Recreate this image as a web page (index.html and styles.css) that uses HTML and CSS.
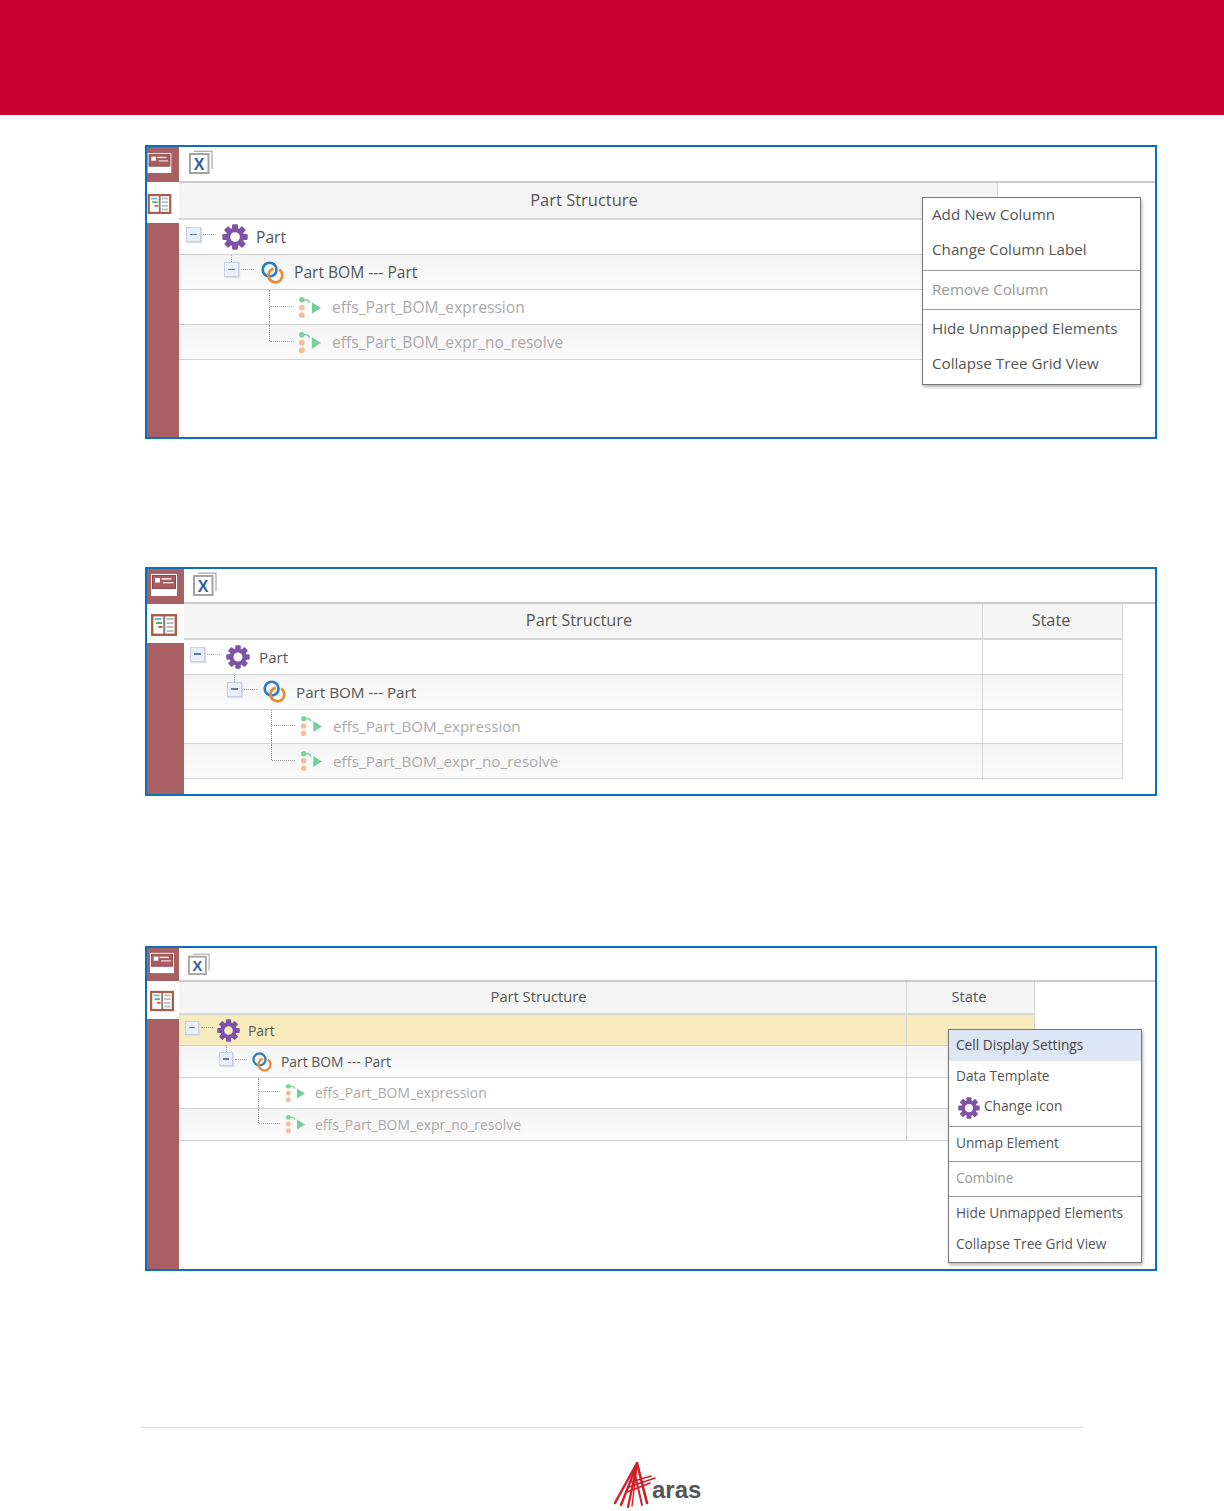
FILE: index.html
```html
<!DOCTYPE html>
<html lang="en">
<head>
<meta charset="utf-8">
<title>Part Structure</title>
<link rel="stylesheet" href="styles.css">
</head>
<body>
<svg class="defs" width="0" height="0" aria-hidden="true">
  <symbol id="gear" viewBox="0 0 24 24">
    <g fill="#7d52a8">
      <rect x="9.3" y="0.3" width="5.4" height="6" rx="1"/>
      <rect x="9.3" y="0.3" width="5.4" height="6" rx="1" transform="rotate(45 12 12)"/>
      <rect x="9.3" y="0.3" width="5.4" height="6" rx="1" transform="rotate(90 12 12)"/>
      <rect x="9.3" y="0.3" width="5.4" height="6" rx="1" transform="rotate(135 12 12)"/>
      <rect x="9.3" y="0.3" width="5.4" height="6" rx="1" transform="rotate(180 12 12)"/>
      <rect x="9.3" y="0.3" width="5.4" height="6" rx="1" transform="rotate(225 12 12)"/>
      <rect x="9.3" y="0.3" width="5.4" height="6" rx="1" transform="rotate(270 12 12)"/>
      <rect x="9.3" y="0.3" width="5.4" height="6" rx="1" transform="rotate(315 12 12)"/>
    </g>
    <circle cx="12" cy="12" r="6.5" fill="none" stroke="#7d52a8" stroke-width="4"/>
  </symbol>
  <symbol id="rings" viewBox="0 0 24 24">
    <circle cx="9" cy="9" r="7.2" fill="none" stroke="#2f7fc4" stroke-width="2.8"/>
    <path d="M19 9A7.2 7.2 0 1 1 13 8.08" fill="none" stroke="#e98a35" stroke-width="2.8"/>
  </symbol>
  <symbol id="effect" viewBox="0 0 24 24">
    <circle cx="4" cy="4" r="2.9" fill="#7fd0a0"/>
    <path d="M4 4H8Q11 4 12 7" fill="none" stroke="#7fd0a0" stroke-width="1.6"/>
    <circle cx="4" cy="12" r="3" fill="#f2bf9a"/>
    <circle cx="4" cy="20" r="3" fill="#f2bf9a"/>
    <path d="M14.5 6.5L24 12.5L14.5 18.5Z" fill="#74cf9b"/>
  </symbol>
  <symbol id="card" viewBox="0 0 26 22">
    <rect width="26" height="22" fill="#fff"/>
    <rect x="1.5" y="1.5" width="23" height="13" fill="#a85c5f" stroke="#93484c"/>
    <rect x="4" y="4" width="5" height="4.5" fill="#fff"/>
    <rect x="10.5" y="4.2" width="10" height="1.4" fill="#fff"/>
    <rect x="12" y="8" width="10.5" height="1.4" fill="#eedcdc"/>
  </symbol>
  <symbol id="tree" viewBox="0 0 26 22">
    <rect x="1.2" y="1.2" width="23.6" height="19.6" fill="#fff" stroke="#ad5c47" stroke-width="2.4"/>
    <rect x="3.5" y="4" width="7" height="2" fill="#7ab7e0"/>
    <rect x="5" y="8" width="6" height="2" fill="#55b36a"/>
    <rect x="7.5" y="12" width="4" height="2" fill="#d9583d"/>
    <rect x="12.2" y="2" width="2" height="18" fill="#7d7d7d"/>
    <g fill="#bdbdbd">
      <rect x="15.5" y="4" width="7" height="2"/>
      <rect x="15.5" y="8" width="7" height="2"/>
      <rect x="15.5" y="12" width="7" height="2"/>
      <rect x="15.5" y="16" width="7" height="2"/>
    </g>
  </symbol>
</svg>

<header class="banner"></header>

<main class="doc">
  <section class="panel panel-a">
    <div class="rail">
      <div class="rail-top"><svg class="rail-icon"><use href="#card"/></svg></div>
      <div class="rail-tab"><svg class="rail-icon"><use href="#tree"/></svg></div>
    </div>
    <div class="content">
      <div class="toolbar">
        <svg class="excel" viewBox="0 0 24 24"><path class="excel-back" d="M5 1.2H23V19"/><rect class="excel-front" x="1" y="4" width="18.5" height="19"/><text class="excel-x" x="10.2" y="19.5" text-anchor="middle">X</text></svg>
      </div>
      <div class="grid">
        <div class="row head"><div class="cell c1">Part Structure</div></div>
        <div class="row"><div class="cell c1"><div class="node lvl0"><span class="exp"></span><span class="dots"></span><svg class="icon"><use href="#gear"/></svg><span class="label">Part</span></div></div></div>
        <div class="row alt"><div class="cell c1"><div class="node lvl1"><span class="exp"></span><span class="dots"></span><svg class="icon"><use href="#rings"/></svg><span class="label">Part BOM --- Part</span></div></div></div>
        <div class="row"><div class="cell c1"><div class="node lvl2 tee"><span class="dots"></span><svg class="icon"><use href="#effect"/></svg><span class="label dim">effs_Part_BOM_expression</span></div></div></div>
        <div class="row alt"><div class="cell c1"><div class="node lvl2 ell"><span class="dots"></span><svg class="icon"><use href="#effect"/></svg><span class="label dim">effs_Part_BOM_expr_no_resolve</span></div></div></div>
      </div>
    </div>
    <div class="menu">
      <div class="group"><div class="item">Add New Column</div><div class="item">Change Column Label</div></div>
      <div class="group"><div class="item off">Remove Column</div></div>
      <div class="group"><div class="item">Hide Unmapped Elements</div><div class="item">Collapse Tree Grid View</div></div>
    </div>
  </section>

  <section class="panel panel-b">
    <div class="rail">
      <div class="rail-top"><svg class="rail-icon"><use href="#card"/></svg></div>
      <div class="rail-tab"><svg class="rail-icon"><use href="#tree"/></svg></div>
    </div>
    <div class="content">
      <div class="toolbar">
        <svg class="excel" viewBox="0 0 24 24"><path class="excel-back" d="M5 1.2H23V19"/><rect class="excel-front" x="1" y="4" width="18.5" height="19"/><text class="excel-x" x="10.2" y="19.5" text-anchor="middle">X</text></svg>
      </div>
      <div class="grid">
        <div class="row head"><div class="cell c1">Part Structure</div><div class="cell c2">State</div></div>
        <div class="row"><div class="cell c1"><div class="node lvl0"><span class="exp"></span><span class="dots"></span><svg class="icon"><use href="#gear"/></svg><span class="label">Part</span></div></div><div class="cell c2"></div></div>
        <div class="row alt"><div class="cell c1"><div class="node lvl1"><span class="exp"></span><span class="dots"></span><svg class="icon"><use href="#rings"/></svg><span class="label">Part BOM --- Part</span></div></div><div class="cell c2"></div></div>
        <div class="row"><div class="cell c1"><div class="node lvl2 tee"><span class="dots"></span><svg class="icon"><use href="#effect"/></svg><span class="label dim">effs_Part_BOM_expression</span></div></div><div class="cell c2"></div></div>
        <div class="row alt"><div class="cell c1"><div class="node lvl2 ell"><span class="dots"></span><svg class="icon"><use href="#effect"/></svg><span class="label dim">effs_Part_BOM_expr_no_resolve</span></div></div><div class="cell c2"></div></div>
      </div>
    </div>
  </section>

  <section class="panel panel-c">
    <div class="rail">
      <div class="rail-top"><svg class="rail-icon"><use href="#card"/></svg></div>
      <div class="rail-tab"><svg class="rail-icon"><use href="#tree"/></svg></div>
    </div>
    <div class="content">
      <div class="toolbar">
        <svg class="excel" viewBox="0 0 24 24"><path class="excel-back" d="M5 1.2H23V19"/><rect class="excel-front" x="1" y="4" width="18.5" height="19"/><text class="excel-x" x="10.2" y="19.5" text-anchor="middle">X</text></svg>
      </div>
      <div class="grid">
        <div class="row head"><div class="cell c1">Part Structure</div><div class="cell c2">State</div></div>
        <div class="row selected"><div class="cell c1"><div class="node lvl0"><span class="exp"></span><span class="dots"></span><svg class="icon"><use href="#gear"/></svg><span class="label">Part</span></div></div><div class="cell c2"></div></div>
        <div class="row alt"><div class="cell c1"><div class="node lvl1"><span class="exp"></span><span class="dots"></span><svg class="icon"><use href="#rings"/></svg><span class="label">Part BOM --- Part</span></div></div><div class="cell c2"></div></div>
        <div class="row"><div class="cell c1"><div class="node lvl2 tee"><span class="dots"></span><svg class="icon"><use href="#effect"/></svg><span class="label dim">effs_Part_BOM_expression</span></div></div><div class="cell c2"></div></div>
        <div class="row alt"><div class="cell c1"><div class="node lvl2 ell"><span class="dots"></span><svg class="icon"><use href="#effect"/></svg><span class="label dim">effs_Part_BOM_expr_no_resolve</span></div></div><div class="cell c2"></div></div>
      </div>
    </div>
    <div class="menu">
      <div class="group">
        <div class="item active">Cell Display Settings</div>
        <div class="item">Data Template</div>
        <div class="item with-icon"><svg class="menu-icon"><use href="#gear"/></svg><span class="item-text">Change icon</span></div>
      </div>
      <div class="group"><div class="item">Unmap Element</div></div>
      <div class="group"><div class="item off">Combine</div></div>
      <div class="group"><div class="item">Hide Unmapped Elements</div><div class="item">Collapse Tree Grid View</div></div>
    </div>
  </section>
</main>

<footer class="footer">
  <div class="logo">
    <svg class="logo-mark" viewBox="0 0 42 46" aria-hidden="true">
      <g fill="none" stroke="#cf1f2b" stroke-linecap="round">
        <path d="M23 1L1 41" stroke-width="2.4"/>
        <path d="M22 5L7 43" stroke-width="2.4"/>
        <path d="M23 3L14 45" stroke-width="2.2"/>
        <path d="M23 4L18 44" stroke-width="1.4"/>
        <path d="M23 1L33 41" stroke-width="2.6"/>
        <path d="M20 8L28 43" stroke-width="2"/>
        <path d="M17 20L37 14" stroke-width="1.5"/>
        <path d="M15 25L41 16" stroke-width="1.5"/>
        <path d="M13 30L36 21" stroke-width="1.5"/>
      </g>
    </svg>
    <span class="logo-text">aras</span>
  </div>
</footer>
</body>
</html>
```

FILE: styles.css
```css
* { box-sizing: border-box; }

html, body { margin: 0; padding: 0; }

body {
  height: 1511px;
  overflow: hidden;
  background: #fff;
  font-family: "Open Sans", "Noto Sans", sans-serif;
  color: #555;
}

.defs { position: absolute; }

.excel-back { fill: none; stroke: #b5b5b5; stroke-width: 1.4; }
.excel-front { fill: #fff; stroke: #a3a3a3; stroke-width: 2; }
.excel-x {
  font-family: "Liberation Sans", sans-serif;
  font-size: 16px;
  font-weight: 700;
  fill: #2f5f9e;
}

.banner { height: 115px; background: #cc0033; }

.doc { display: flex; flex-direction: column; padding-left: 145px; }

.panel {
  position: relative;
  display: flex;
  width: 1012px;
  border: 2px solid #0a6fbd;
  background: #fff;
}

.panel-a {
  margin-top: 30px;
  height: 294px;
  --rail: 32px;
  --rail-top: 35px;
  --toolbar: 36px;
  --tab: 41px;
  --head: 37px;
  --head-nudge: 2px;
  --row: 35px;
  --font: 15.6px;
  --head-font: 16.5px;
  --c1: 819px;
  --c2: 0px;
  --rail-pad: 0px;
  --rail-w: 25px;
  --rail-h: 20px;
  --excel-pad: 10px;
  --excel-top: 3px;
  --excel: 24px;
  --i0: 7px; --i1: 45px; --i2: 90px;
  --exp: 15px;
  --dots: 13px;
  --gear: 26px; --rings: 23px; --effect: 23px;
  --leaf-dots: 22px;
  --gap0: 8px; --gap1: 10px; --gap2: 11px;
  --before0: 6px; --before1: 7px; --before2: 6px;
}

.panel-b {
  margin-top: 128px;
  height: 229px;
  --rail: 37px;
  --rail-top: 35px;
  --toolbar: 35px;
  --tab: 39px;
  --head: 36px;
  --head-nudge: 3px;
  --row: 34.8px;
  --font: 15.2px;
  --head-font: 16.3px;
  --c1: 799px;
  --c2: 140px;
  --rail-pad: 4px;
  --rail-w: 26px;
  --rail-h: 22px;
  --excel-pad: 9px;
  --excel-top: 3px;
  --excel: 24px;
  --i0: 6px; --i1: 43px; --i2: 87px;
  --exp: 15px;
  --dots: 13px;
  --gear: 24px; --rings: 23px; --effect: 22px;
  --leaf-dots: 23px;
  --gap0: 9px; --gap1: 10px; --gap2: 11px;
  --before0: 6px; --before1: 6px; --before2: 5px;
}

.panel-c {
  margin-top: 150px;
  height: 325px;
  --rail: 32px;
  --rail-top: 33px;
  --toolbar: 34px;
  --tab: 38px;
  --head: 33px;
  --head-nudge: 3px;
  --row: 31.4px;
  --font: 13.9px;
  --head-font: 14.7px;
  --c1: 728px;
  --c2: 128px;
  --rail-pad: 3px;
  --rail-w: 24px;
  --rail-h: 22px;
  --excel-pad: 9px;
  --excel-top: 5px;
  --excel: 22px;
  --i0: 6px; --i1: 40px; --i2: 79px;
  --exp: 14px;
  --dots: 12px;
  --gear: 23px; --rings: 20px; --effect: 20px;
  --leaf-dots: 21px;
  --gap0: 8px; --gap1: 9px; --gap2: 10px;
  --before0: 4px; --before1: 5px; --before2: 5px;
}

.rail {
  flex: none;
  width: var(--rail);
  display: flex;
  flex-direction: column;
  background: #a86063;
}

.rail-top {
  height: var(--rail-top);
  display: flex;
  align-items: center;
  padding: 0 0 3px var(--rail-pad);
}

.rail-tab {
  height: var(--tab);
  display: flex;
  align-items: center;
  padding: 2px 0 0 var(--rail-pad);
  background: #fff;
}

.rail-icon { width: var(--rail-w); height: var(--rail-h); flex: none; }

.content { flex: 1; min-width: 0; display: flex; flex-direction: column; }

.toolbar {
  flex: none;
  height: var(--toolbar);
  display: flex;
  align-items: flex-start;
  padding: var(--excel-top) 0 0 var(--excel-pad);
  border-bottom: 2px solid #c8ccd0;
}

.excel { width: var(--excel); height: var(--excel); }

.row {
  display: flex;
  height: var(--row);
  width: calc(var(--c1) + var(--c2));
  border-bottom: 1px solid #cfd1d3;
}

.row.alt { background: linear-gradient(#f4f4f4, #fbfbfb); }
.row.selected { background: #f8ebbd; }

.row.head {
  height: var(--head);
  background: #f5f5f5;
  font-size: var(--head-font);
  border-bottom: 2px solid #d4d6d8;
}

.cell { flex: none; display: flex; align-items: center; border-right: 1px solid #d4d6d8; }
.c1 { width: var(--c1); }
.c2 { width: var(--c2); }
.head .cell { justify-content: center; padding-bottom: var(--head-nudge); }
.head .c1 { padding-right: 8px; }
.head .c2 { padding-right: 3px; }

.node { position: relative; display: flex; align-items: center; height: 100%; width: 100%; font-size: var(--font); }

.lvl0 { padding-left: var(--i0); }
.lvl1 { padding-left: var(--i1); }
.lvl2 { padding-left: var(--i2); }

.exp {
  position: relative;
  flex: none;
  width: var(--exp);
  height: var(--exp);
  margin-top: -5px;
  background: #e9eff8;
  border: 1px solid #c4d0e4;
  box-shadow: 1px 1px 1px #ddd;
}

.exp::after {
  content: "";
  position: absolute;
  left: 3px;
  right: 3px;
  top: calc(50% - 1px);
  height: 1.5px;
  background: #5c7db0;
}

.lvl1 .exp::before {
  content: "";
  position: absolute;
  left: 6px;
  top: -8px;
  height: 7px;
  border-left: 1px dotted #aaa;
}

.dots {
  flex: none;
  width: var(--dots);
  margin-left: 2px;
  margin-top: -5px;
  border-top: 1px dotted #aaa;
}

.lvl2 .dots { width: var(--leaf-dots); margin-left: 1px; margin-top: -2px; }

.tee::before, .ell::before {
  content: "";
  position: absolute;
  left: var(--i2);
  top: 0;
  border-left: 1px dotted #999;
}

.tee::before { height: 100%; }
.ell::before { height: calc(50% - 1px); }

.icon { flex: none; }
.lvl0 .icon { width: var(--gear); height: var(--gear); margin-left: var(--before0); margin-right: var(--gap0); }
.lvl1 .icon { width: var(--rings); height: var(--rings); margin-left: var(--before1); margin-right: var(--gap1); }
.lvl2 .icon { width: var(--effect); height: var(--effect); margin-left: var(--before2); margin-right: var(--gap2); }

.label { white-space: nowrap; color: #555; }
.label.dim { color: #aaa; }

.menu {
  position: absolute;
  background: #fff;
  border: 1px solid #777;
  box-shadow: 1px 2px 3px rgba(0, 0, 0, 0.3);
  color: #555;
}

.panel-a .menu { left: 775px; top: 50px; width: 219px; height: 188px; font-size: 15.2px; --item: 35px; --item-pad: 9px; }
.panel-c .menu { left: 801px; top: 81px; width: 194px; height: 234px; font-size: 13.7px; --item: 31px; --item-pad: 7px; }

.group { padding-bottom: 2px; border-bottom: 1px solid #999; }
.group + .group { padding-top: 1px; }
.group:last-child { border-bottom: 0; padding-bottom: 0; }
.panel-c .group:first-child { padding-bottom: 3px; }

.item {
  display: flex;
  align-items: center;
  height: var(--item);
  padding-left: var(--item-pad);
  padding-bottom: 2px;
  white-space: nowrap;
}

.panel-a .group:first-child .item { padding-bottom: 4px; }

.item.off { color: #999; }
.item.active { background: #dce6f4; color: #444; }
.with-icon { padding-left: 9px; padding-bottom: 0; }
.menu-icon { width: 22px; height: 22px; margin-right: 4px; flex: none; }
.item-text { margin-bottom: 4px; }

.footer {
  margin: 156px 0 0 140px;
  width: 944px;
  border-top: 1px solid #ddd;
  display: flex;
}

.logo { display: flex; align-items: flex-end; margin: 34px 0 0 474px; }
.logo-mark { width: 42px; height: 46px; flex: none; }
.logo-text {
  font-family: "Liberation Sans", sans-serif;
  font-weight: 700;
  font-size: 24px;
  line-height: 24px;
  color: #555;
  margin: 0 0 6px -4px;
}
```
